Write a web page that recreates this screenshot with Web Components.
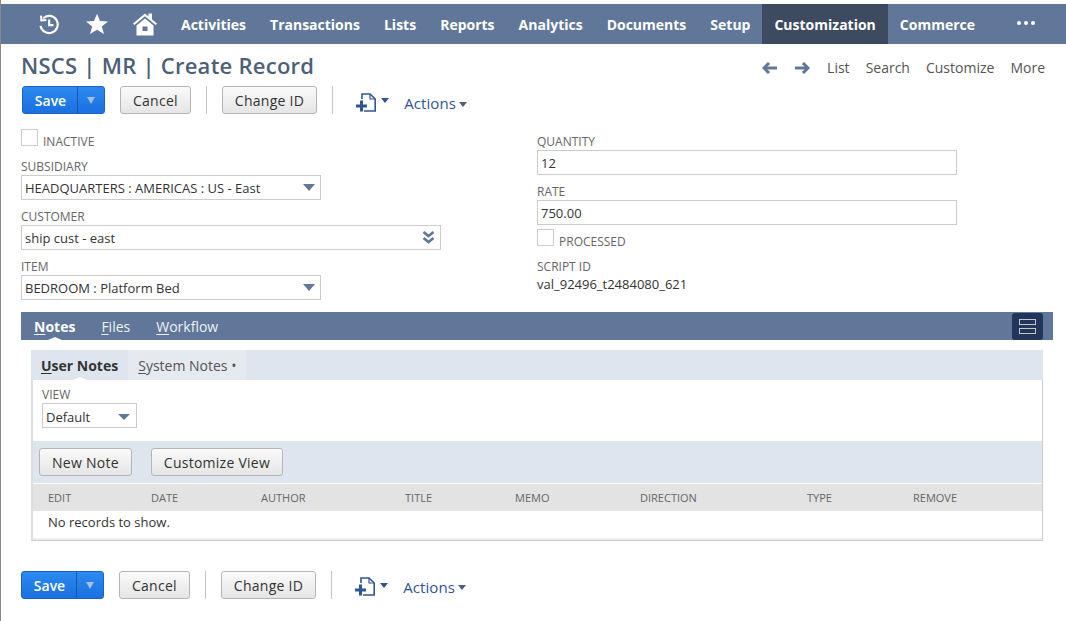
<!DOCTYPE html>
<html>
<head>
<meta charset="utf-8">
<title>NSCS | MR | Create Record</title>
<style>
  html, body { margin: 0; padding: 0; background: #fff; }
  body {
    font-family: "Open Sans", "Liberation Sans", sans-serif;
    font-size: 13px;
    color: #333;
    width: 1066px;
    height: 621px;
    overflow: hidden;
    box-sizing: border-box;
    border-left: 1px solid #888;
  }
</style>
</head>
<body>
<ns-nav></ns-nav>
<ns-titlebar title-text="NSCS | MR | Create Record"></ns-titlebar>
<ns-toolbar></ns-toolbar>
<ns-form></ns-form>
<ns-tabs></ns-tabs>
<ns-toolbar placement="bottom"></ns-toolbar>

<script>
class NsNav extends HTMLElement {
    constructor() {
        super();
        this.shadowDOM = this.attachShadow({mode:"open"});
        this.shadowDOM.innerHTML = `
        <style>
            :host { display: flex; height: 40px; margin-top: 4px; background: #607799; color: #fff; font-size: 14px; font-weight: 700; padding-left: 37px; box-sizing: border-box; }
            .icons { display: flex; align-items: center; gap: 24px; width: 131px; flex: none; }
            .icons svg { display: block; flex: none; }
            .item { display: flex; align-items: center; padding: 0 12px; }
            .on { background: #3d4a60; }
            .dots { padding: 0 0 2px; margin-left: 30px; gap: 3px; }
            .dots i { width: 4px; height: 4px; border-radius: 50%; background: #fff; display: block; }
        </style>
        <div class="icons">
            <svg width="22" height="22" viewBox="0 0 22 22" fill="none" stroke="#fff" stroke-width="2.2">
                <path d="M5.2 5.2 A8.6 8.6 0 1 1 2.6 12.8"/>
                <path d="M3 2.6 L3.4 7.4 L8.4 7" stroke-width="2"/>
                <path d="M11.2 6.5 V12.2 H15.5"/>
            </svg>
            <svg width="24" height="22" viewBox="0 0 24 22" fill="#fff" style="margin-left:1px">
                <path d="M12 .8 L15 8 L23 8.5 L16.8 13.4 L19 21 L12 16.8 L5 21 L7.2 13.4 L1 8.5 L9 8 Z"/>
            </svg>
            <svg width="26" height="24" viewBox="0 0 26 24" fill="#fff" style="margin-left:-1px">
                <path d="M1 11.5 L13 1.5 L16.5 4.5 V1.5 H20 V7.4 L25 11.5 L23.6 13 L13 4.3 L2.4 13 Z"/>
                <path fill-rule="evenodd" d="M4.5 13.4 L13 6.4 L21.5 13.4 V23.5 H4.5 Z M10.5 14.5 V19 H15.5 V14.5 Z"/>
            </svg>
        </div>
        <div class="item">Activities</div>
        <div class="item">Transactions</div>
        <div class="item">Lists</div>
        <div class="item">Reports</div>
        <div class="item">Analytics</div>
        <div class="item">Documents</div>
        <div class="item">Setup</div>
        <div class="item on">Customization</div>
        <div class="item">Commerce</div>
        <div class="item dots"><i></i><i></i><i></i></div>
        `;
    }
}
customElements.define("ns-nav", NsNav);

class NsTitlebar extends HTMLElement {
    constructor() {
        super();
        this.shadowDOM = this.attachShadow({mode:"open"});
    }
    connectedCallback() {
        this.shadowDOM.innerHTML = `
        <style>
            :host { display: flex; align-items: center; justify-content: space-between; height: 42px; padding: 0 21px 0 20px; box-sizing: border-box; }
            h1 { margin: 0; font-size: 22px; font-weight: 600; color: #4d5f79; line-height: 44px; letter-spacing: 0.25px; }
            nav { display: flex; align-items: center; font-size: 14px; color: #555; margin-top: 5px; }
            svg { display: block; }
            a.l { margin-left: 16px; }
            .arrows { display: flex; gap: 18px; }
        </style>
        <h1>${this.getAttribute("title-text")}</h1>
        <nav>
            <div class="arrows">
                <svg width="15" height="12" viewBox="0 0 15 12" fill="none" stroke="#607799" stroke-width="3"><path d="M15 6 H3"/><path d="M7 1 L2 6 L7 11"/></svg>
                <svg width="15" height="12" viewBox="0 0 15 12" fill="none" stroke="#607799" stroke-width="3"><path d="M0 6 H12"/><path d="M8 1 L13 6 L8 11"/></svg>
            </div>
            <a class="l" style="margin-left:17px">List</a>
            <a class="l">Search</a>
            <a class="l">Customize</a>
            <a class="l">More</a>
        </nav>
        `;
    }
}
customElements.define("ns-titlebar", NsTitlebar);

class NsButton extends HTMLElement {
    constructor() {
        super();
        this.shadowDOM = this.attachShadow({mode:"open"});
        this.shadowDOM.innerHTML = `
        <style>
            :host { display: inline-flex; align-items: center; justify-content: center; box-sizing: border-box; height: 28px; padding: 0 12px; border: 1px solid #b5b5b5; border-radius: 3px; background: linear-gradient(#fafafa, #e5e5e5); color: #333; font-size: 14px; font-weight: 500; letter-spacing: .26px; white-space: nowrap; }
        </style>
        <slot></slot>
        `;
    }
}
customElements.define("ns-button", NsButton);

class NsToolbar extends HTMLElement {
    constructor() {
        super();
        this.shadowDOM = this.attachShadow({mode:"open"});
        this.shadowDOM.innerHTML = `
        <style>
            :host { display: flex; align-items: center; height: 28px; padding-left: 21px; --drop: 4px; --text-drop: 6px; }
            :host([placement="bottom"]) { padding-left: 20px; margin-top: 30px; --drop: 3px; --text-drop: 3px; }
            .save { display: flex; height: 28px; box-sizing: border-box; width: 83px; border: 1px solid #1b62c4; border-radius: 3px; background: linear-gradient(#2c8af0, #1a70e0); color: #fff; font-size: 14px; }
            .save b { flex: 1; display: flex; align-items: center; justify-content: center; font-weight: 600; padding-left: 1px; }
            .save span { width: 26px; border-left: 1px solid #1b57a8; display: flex; align-items: center; justify-content: center; }
            .tri { width: 0; height: 0; border: 4px solid transparent; border-top: 7px solid #a9bedb; border-bottom: 0; }
            .cancel { margin-left: 15px; }
            .sep { width: 1px; height: 28px; background: #c4c4c4; margin: 0 15px; flex: none; }
            .new { display: flex; align-items: center; margin: var(--drop) 0 0 8px; }
            svg { display: block; }
            .down { width: 0; height: 0; border: 4px solid transparent; border-top: 5px solid #2f5596; border-bottom: 0; margin-left: 4px; margin-top: -3px; }
            .actions { display: flex; align-items: center; margin: var(--text-drop) 0 0 15px; color: #2f5596; font-size: 15px; font-weight: 500; letter-spacing: .1px; }
            .actions i { width: 0; height: 0; border: 4px solid transparent; border-top: 5px solid #4d5f79; border-bottom: 0; margin: 2px 0 0 3px; }
        </style>
        <div class="save"><b>Save</b><span><i class="tri"></i></span></div>
        <ns-button class="cancel">Cancel</ns-button>
        <i class="sep"></i>
        <ns-button>Change ID</ns-button>
        <i class="sep"></i>
        <div class="new">
            <svg width="21" height="19" viewBox="0 0 21 19" fill="none" stroke="#2f5596">
                <path stroke-width="1.6" d="M6 6 V1 H14 L19.2 6 V18 H8"/>
                <path stroke-width="1.2" d="M14 1 V6 H19"/>
                <path stroke-width="3" d="M0 13 H11 M5.5 7.5 V18.5"/>
            </svg>
            <i class="down"></i>
        </div>
        <div class="actions">Actions<i></i></div>
        `;
    }
}
customElements.define("ns-toolbar", NsToolbar);

class NsField extends HTMLElement {
    constructor() {
        super();
        this.shadowDOM = this.attachShadow({mode:"open"});
    }
    connectedCallback() {
        const type = this.getAttribute("type") || "text";
        const label = this.getAttribute("label");
        const value = this.getAttribute("value") || "";
        let body = `<div class="box"><span>${value}</span></div>`;
        if (type === "select") body = `<div class="box"><span>${value}</span><i class="tri"></i></div>`;
        if (type === "multi") body = `<div class="box"><span>${value}</span>
            <svg width="13" height="13" viewBox="0 0 13 13" fill="none" stroke="#607799" stroke-width="2.6"><path d="M1.5 1 L6.5 5 L11.5 1"/><path d="M1.5 7 L6.5 11 L11.5 7"/></svg></div>`;
        if (type === "plain") body = `<div class="plain">${value}</div>`;
        if (type === "check") {
            this.shadowDOM.innerHTML = `
            <style>
                :host { display: flex; height: 21px; font-size: 12px; color: #666; }
                i { width: 15px; height: 15px; border: 1px solid #ccc; background: #fff; margin-right: 5px; display: block; }
                span { align-self: flex-end; line-height: 16px; padding-top: 1px; }
            </style>
            <i></i><span>${label}</span>`;
            return;
        }
        this.shadowDOM.innerHTML = `
        <style>
            :host { display: block; width: var(--w, 300px); font-size: 13px; color: #333; }
            label { display: block; height: 17px; line-height: 17px; font-size: 12px; color: #666; }
            .box { box-sizing: border-box; height: 25px; border: 1px solid #ccc; background: #fff; display: flex; align-items: center; justify-content: space-between; padding: 0 5px 0 3px; }
            .plain { height: 25px; line-height: 17px; padding-top: 1px; }
            .tri { width: 0; height: 0; border: 6.5px solid transparent; border-top: 7px solid #607799; border-bottom: 0; }
            svg { display: block; }
        </style>
        <label>${label}</label>
        ${body}
        `;
    }
}
customElements.define("ns-field", NsField);

class NsForm extends HTMLElement {
    constructor() {
        super();
        this.shadowDOM = this.attachShadow({mode:"open"});
        this.shadowDOM.innerHTML = `
        <style>
            :host { display: grid; grid-template-columns: 516px 1fr; padding: 15px 0 0 20px; height: 198px; box-sizing: border-box; }
            .col { display: flex; flex-direction: column; gap: 8px; }
            .right { padding-top: 4px; }
        </style>
        <div class="col">
            <ns-field type="check" label="INACTIVE"></ns-field>
            <ns-field type="select" label="SUBSIDIARY" value="HEADQUARTERS : AMERICAS : US - East"></ns-field>
            <ns-field type="multi" label="CUSTOMER" value="ship cust - east" style="--w:420px"></ns-field>
            <ns-field type="select" label="ITEM" value="BEDROOM : Platform Bed"></ns-field>
        </div>
        <div class="col right">
            <ns-field label="QUANTITY" value="12" style="--w:420px"></ns-field>
            <ns-field label="RATE" value="750.00" style="--w:420px"></ns-field>
            <ns-field type="check" label="PROCESSED" style="margin-top:-4px"></ns-field>
            <ns-field type="plain" label="SCRIPT ID" value="val_92496_t2484080_621"></ns-field>
        </div>
        `;
    }
}
customElements.define("ns-form", NsForm);

class NsNotes extends HTMLElement {
    constructor() {
        super();
        this.shadowDOM = this.attachShadow({mode:"open"});
        this.shadowDOM.innerHTML = `
        <style>
            :host { display: block; margin: 10px 10px 0; font-size: 13px; }
            .head { display: flex; height: 30px; background: #dfe5ee; color: #555; font-size: 14px; }
            .tab { display: flex; align-items: center; padding: 0 10px; position: relative; }
            .tab.on { font-weight: 700; color: #333; }
            .tab.on::after { content: ""; position: absolute; left: 42px; bottom: 0; border: 7px solid transparent; border-bottom: 3px solid #fff; border-top: 0; }
            .tab.sys { background: #e5e9f0; }
            u { text-decoration-thickness: 1px; text-underline-offset: 2px; }
            .panel { border: solid #ccc; border-width: 0 1px 1px 2px; border-left-color: #ddd; height: 161px; box-sizing: border-box; }
            .view { height: 61px; padding: 6px 0 0 9px; box-sizing: border-box; }
            .view label { display: block; height: 17px; line-height: 17px; font-size: 12px; color: #666; }
            .sel { box-sizing: border-box; width: 95px; height: 25px; border: 1px solid #ccc; display: flex; align-items: center; justify-content: space-between; padding: 2px 6px 0 3px; color: #333; }
            .sel i { border: 6px solid transparent; border-top: 6px solid #607799; border-bottom: 0; }
            .bar { height: 42px; background: #dfe5ee; display: flex; align-items: center; gap: 19px; padding-left: 6px; }
            .thead { display: grid; grid-template-columns: 103px 110px 144px 110px 125px 167px 106px auto; height: 27px; margin-top: 1px; align-items: center; background: #e3e3e3; padding-left: 15px; font-size: 11px; color: #666; }
            .row { height: 27px; line-height: 23px; padding-left: 15px; color: #333; }
            .row-end { height: 2px; background: #eee; }
        </style>
        <div class="head">
            <div class="tab on"><span><u>U</u>ser Notes</span></div>
            <div class="tab sys"><span><u>S</u>ystem Notes &bull;</span></div>
        </div>
        <div class="panel">
            <div class="view">
                <label>VIEW</label>
                <div class="sel"><span>Default</span><i></i></div>
            </div>
            <div class="bar">
                <ns-button>New Note</ns-button>
                <ns-button>Customize View</ns-button>
            </div>
            <div class="thead">
                <span>EDIT</span><span>DATE</span><span>AUTHOR</span><span>TITLE</span><span>MEMO</span><span>DIRECTION</span><span>TYPE</span><span>REMOVE</span>
            </div>
            <div class="row">No records to show.</div>
            <div class="row-end"></div>
        </div>
        `;
    }
}
customElements.define("ns-notes", NsNotes);

class NsTabs extends HTMLElement {
    constructor() {
        super();
        this.shadowDOM = this.attachShadow({mode:"open"});
        this.shadowDOM.innerHTML = `
        <style>
            :host { display: block; margin: 0 13px 0 20px; }
            .bar { display: flex; align-items: center; height: 28px; background: #607799; color: #fff; font-size: 14px; padding-left: 13px; }
            .t { margin-right: 26px; color: #eef1f6; }
            .t.on { font-weight: 700; color: #fff; position: relative; }
            .t.on::after { content: ""; position: absolute; left: 14px; bottom: -4px; border: 7px solid transparent; border-bottom: 3px solid #fff; border-top: 0; }
            u { text-decoration-thickness: 1px; text-underline-offset: 2px; }
            .toggle { margin-left: auto; margin-right: 10px; width: 31px; height: 27px; border-radius: 3px; background: #21365a; display: flex; flex-direction: column; align-items: center; justify-content: center; gap: 3px; }
            .toggle i { display: block; width: 15px; height: 4px; border: 1px solid #c6c6c6; }
        </style>
        <div class="bar">
            <span class="t on"><u>N</u>otes</span>
            <span class="t"><u>F</u>iles</span>
            <span class="t"><u>W</u>orkflow</span>
            <div class="toggle"><i></i><i></i></div>
        </div>
        <ns-notes></ns-notes>
        `;
    }
}
customElements.define("ns-tabs", NsTabs);
</script>
</body>
</html>
